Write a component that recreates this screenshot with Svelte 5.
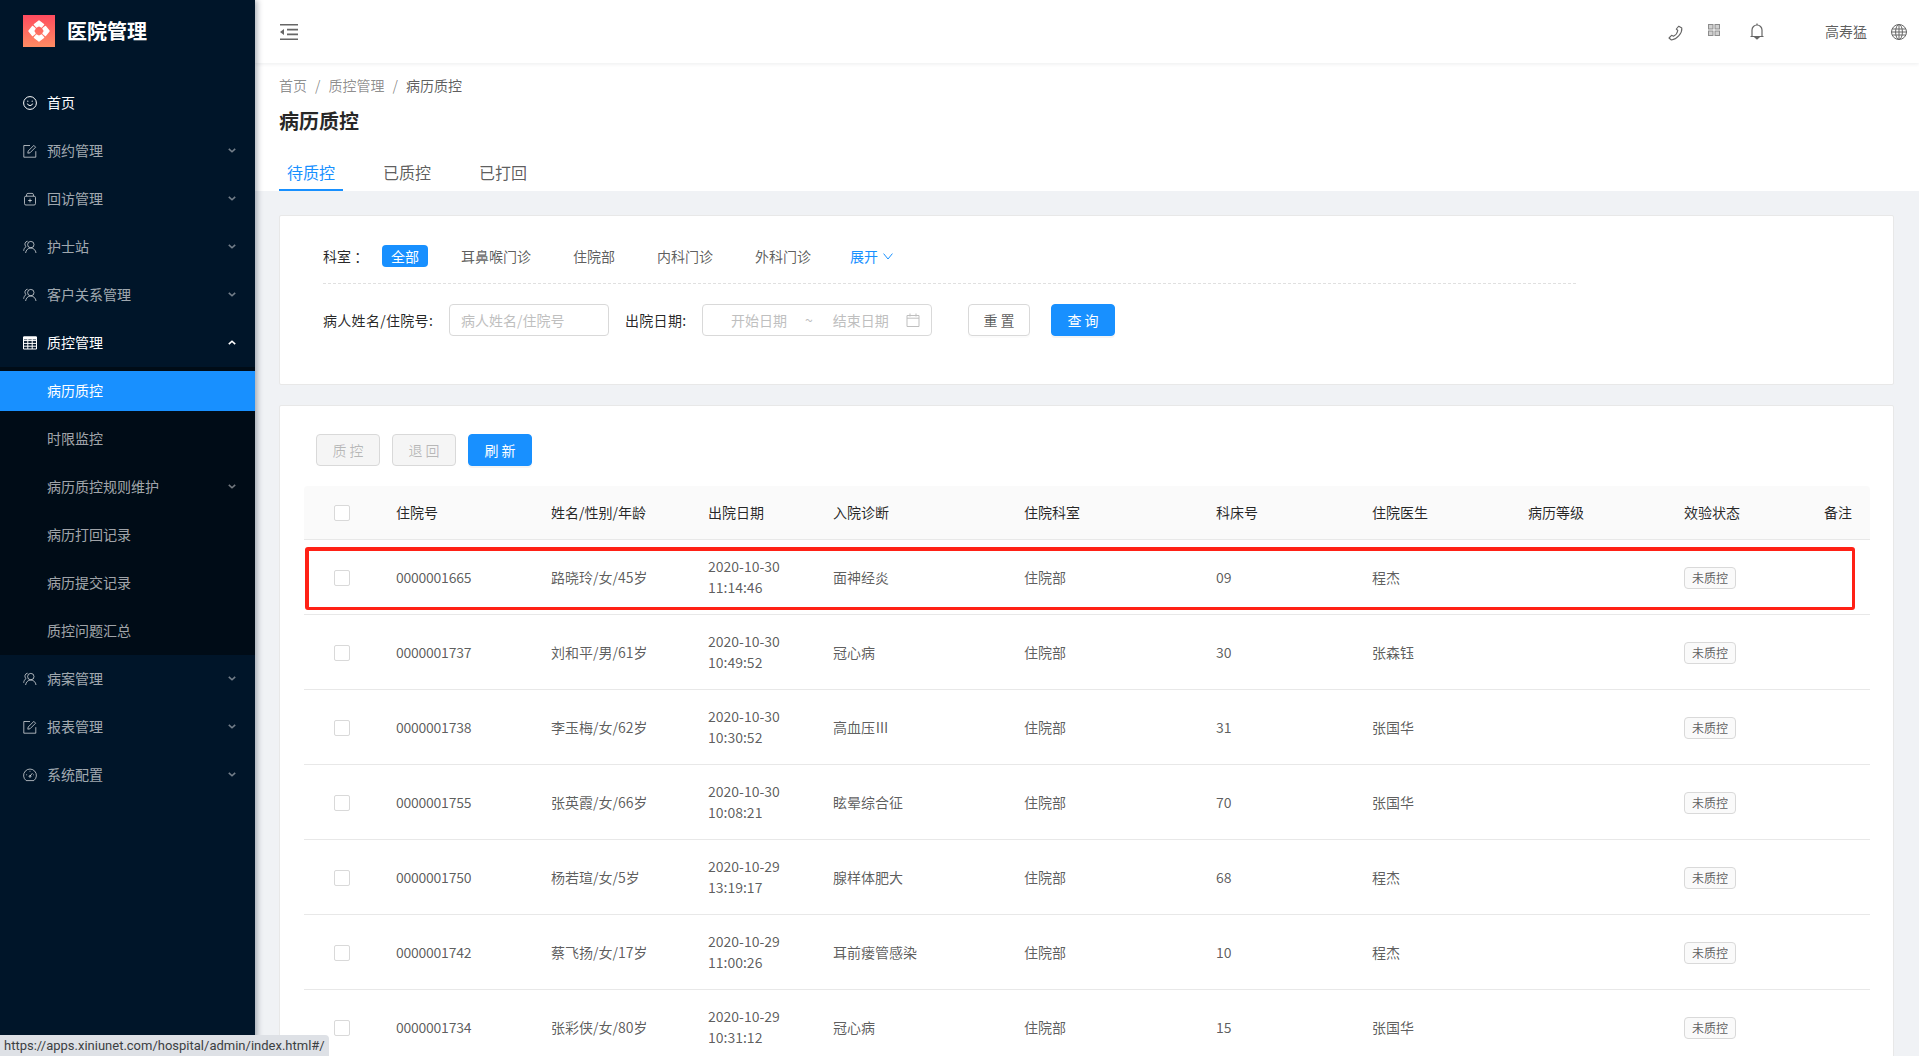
<script>
  const menu = [
    { label: "首页", icon: "smile", active: true },
    { label: "预约管理", icon: "edit", arrow: "down" },
    { label: "回访管理", icon: "bag", arrow: "down" },
    { label: "护士站", icon: "team", arrow: "down" },
    { label: "客户关系管理", icon: "team", arrow: "down" },
    {
      label: "质控管理",
      icon: "table",
      arrow: "up",
      active: true,
      children: [
        { label: "病历质控", selected: true },
        { label: "时限监控" },
        { label: "病历质控规则维护", arrow: "down" },
        { label: "病历打回记录" },
        { label: "病历提交记录" },
        { label: "质控问题汇总" },
      ],
    },
    { label: "病案管理", icon: "team", arrow: "down" },
    { label: "报表管理", icon: "edit", arrow: "down" },
    { label: "系统配置", icon: "gauge", arrow: "down" },
  ];

  const departments = ["全部", "耳鼻喉门诊", "住院部", "内科门诊", "外科门诊"];
  const tabs = ["待质控", "已质控", "已打回"];
  const heads = ["住院号", "姓名/性别/年龄", "出院日期", "入院诊断", "住院科室", "科床号", "住院医生", "病历等级", "效验状态", "备注"];

  const rows = [
    { no: "0000001665", name: "路晓玲/女/45岁", date: "2020-10-30", time: "11:14:46", diag: "面神经炎", bed: "09", doctor: "程杰" },
    { no: "0000001737", name: "刘和平/男/61岁", date: "2020-10-30", time: "10:49:52", diag: "冠心病", bed: "30", doctor: "张森钰" },
    { no: "0000001738", name: "李玉梅/女/62岁", date: "2020-10-30", time: "10:30:52", diag: "高血压Ⅲ", bed: "31", doctor: "张国华" },
    { no: "0000001755", name: "张英霞/女/66岁", date: "2020-10-30", time: "10:08:21", diag: "眩晕综合征", bed: "70", doctor: "张国华" },
    { no: "0000001750", name: "杨若瑄/女/5岁", date: "2020-10-29", time: "13:19:17", diag: "腺样体肥大", bed: "68", doctor: "程杰" },
    { no: "0000001742", name: "蔡飞扬/女/17岁", date: "2020-10-29", time: "11:00:26", diag: "耳前瘘管感染", bed: "10", doctor: "程杰" },
    { no: "0000001734", name: "张彩侠/女/80岁", date: "2020-10-29", time: "10:31:12", diag: "冠心病", bed: "15", doctor: "张国华" },
  ];
</script>

{#snippet icon(name)}
  <svg class="ico" viewBox="0 0 14 14" fill="none" stroke="currentColor" stroke-width="1">
    {#if name === "smile"}
      <circle cx="7" cy="7" r="6.4" />
      <path d="M4.4 7.6a2.7 2.7 0 0 0 5.2 0" />
      <circle cx="4.8" cy="5.2" r=".6" fill="currentColor" stroke="none" />
      <circle cx="9.2" cy="5.2" r=".6" fill="currentColor" stroke="none" />
    {:else if name === "edit"}
      <path d="M7 1.5H.8v11.7h12V7.2" />
      <path d="M4.8 9.2l.4-2.2 5.6-5.6 1.8 1.8-5.6 5.6z" />
    {:else if name === "bag"}
      <rect x="1.5" y="4.2" width="11" height="8.8" rx="1.4" />
      <path d="M3.6 4.2V2.6c0-.7.5-1.2 1.2-1.2h4.4c.7 0 1.2.5 1.2 1.2v1.6M7 6.6v3.8M5.1 8.5h3.8" />
    {:else if name === "team"}
      <circle cx="7.8" cy="4.6" r="3.2" />
      <path d="M2.6 13c.3-2.7 2.3-5 5.2-5s4.9 2.3 5.2 5" />
      <path d="M4.6 1.2a3 3 0 0 0-1.6 5.3C1.7 7.4.8 9 .7 10.8" />
    {:else if name === "table"}
      <path d="M.5 1h13v12H.5zM.5 4.6h13M.5 7.4h13M.5 10.2h13M4.8 3V13M9.2 3V13" />
      <path d="M.5 1h13v2H.5z" fill="currentColor" />
    {:else if name === "gauge"}
      <path d="M3.2 12.6a6.4 6.4 0 1 1 7.6 0z" />
      <path d="M7 8.2l2.4-3M3.2 6.8h.9M7 2.8v.9M10.1 6.8h.7" />
      <circle cx="7" cy="8.4" r=".9" />
    {/if}
  </svg>
{/snippet}

{#snippet chevron(dir)}
  <svg class="chev" class:up={dir === "up"} viewBox="0 0 10 6" fill="none" stroke="currentColor" stroke-width="2">
    {#if dir === "up"}
      <path d="M1 5l4-3.6L9 5" />
    {:else}
      <path d="M1 1l4 3.6L9 1" />
    {/if}
  </svg>
{/snippet}

<div class="layout">
  <aside class="sider">
    <div class="brand">
      <svg class="logo" viewBox="0 0 32 32">
        <defs>
          <linearGradient id="logo-bg" x1="0" y1="0" x2="0" y2="1">
            <stop offset="0" stop-color="#ff4b5f" />
            <stop offset="1" stop-color="#ff8c63" />
          </linearGradient>
        </defs>
        <rect width="32" height="32" fill="url(#logo-bg)" />
        <g fill="#fff" stroke="#fff" stroke-width="1.4" stroke-linejoin="round">
          <path d="M16 6l4.6 3.6-2.2 2.4-2.4-1.4-2.4 1.4-2.2-2.4z" />
          <path d="M16 6l4.6 3.6-2.2 2.4-2.4-1.4-2.4 1.4-2.2-2.4z" transform="rotate(90 16 16)" />
          <path d="M16 6l4.6 3.6-2.2 2.4-2.4-1.4-2.4 1.4-2.2-2.4z" transform="rotate(180 16 16)" />
          <path d="M16 6l4.6 3.6-2.2 2.4-2.4-1.4-2.4 1.4-2.2-2.4z" transform="rotate(270 16 16)" />
        </g>
      </svg>
      <span class="brand-name">医院管理</span>
    </div>

    <nav class="menu">
      {#each menu as item}
        <div class="menu-item" class:active={item.active}>
          {@render icon(item.icon)}
          <span>{item.label}</span>
          {#if item.arrow}
            {@render chevron(item.arrow)}
          {/if}
        </div>
        {#if item.children}
          <div class="submenu">
            {#each item.children as sub}
              <div class="sub-item" class:selected={sub.selected}>
                <span>{sub.label}</span>
                {#if sub.arrow}
                  {@render chevron(sub.arrow)}
                {/if}
              </div>
            {/each}
          </div>
        {/if}
      {/each}
    </nav>
  </aside>

  <div class="main">
    <header class="topbar">
      <svg class="fold" viewBox="0 0 18 16" fill="#666">
        <path d="M0 0h18v1.6H0zM0 14.4h18V16H0zM7 4.8h11v1.6H7zM7 9.6h11v1.6H7zM4 5v6L0 8z" />
      </svg>
      <div class="top-right">
        <svg class="t-phone" viewBox="0 0 16 16" fill="none" stroke="#666" stroke-width="1.1" stroke-linejoin="round">
          <path d="M10.8 1.2l3 1.8c.6 5-4.8 11.4-10.4 12L1 13l2.6-2.7 1.9 1c1.9-1 3.9-3.6 4.3-5.8L8.3 4z" />
        </svg>
        <svg class="t-grid" viewBox="0 0 12 12" fill="#d0d0d0" stroke="#8c8c8c" stroke-width="1">
          <rect x=".5" y=".5" width="4.5" height="4.5" />
          <rect x="7" y=".5" width="4.5" height="4.5" />
          <rect x=".5" y="7" width="4.5" height="4.5" />
          <rect x="7" y="7" width="4.5" height="4.5" />
        </svg>
        <svg class="t-bell" viewBox="0 0 14 17" fill="none" stroke="#666" stroke-width="1.2">
          <path d="M2 13.5V7a5 5 0 0 1 10 0v6.5M.5 13.5h13" />
          <path d="M7 .5V2" />
          <path d="M5.4 14.5h3.2L7 16z" fill="#666" />
        </svg>
        <span class="user">高寿猛</span>
        <svg class="t-globe" viewBox="0 0 16 16" fill="none" stroke="#666" stroke-width="1">
          <circle cx="8" cy="8" r="7.5" />
          <ellipse cx="8" cy="8" rx="3.4" ry="7.5" />
          <path d="M8 .5v15M1.2 5h13.6M1.2 11h13.6M.5 8h15" />
        </svg>
      </div>
    </header>

    <section class="page-head">
      <div class="crumbs">
        <span>首页</span><i>/</i><span>质控管理</span><i>/</i><span class="current">病历质控</span>
      </div>
      <h1>病历质控</h1>
      <div class="tabs">
        {#each tabs as tab, i}
          <div class="tab" class:on={i === 0}>{tab}</div>
        {/each}
      </div>
    </section>

    <section class="card filter-card">
      <div class="dept-row">
        <span class="dept-label">科室 ：</span>
        {#each departments as dept, i}
          <span class="dept" class:on={i === 0}>{dept}</span>
        {/each}
        <span class="expand">
          展开
          <svg viewBox="0 0 10 7" fill="none" stroke="currentColor" stroke-width="1"><path d="M.6.6L5 6 9.4.6" /></svg>
        </span>
      </div>
      <div class="search-row">
        <label class="name-label" for="patient">病人姓名/住院号:</label>
        <input id="patient" class="input" placeholder="病人姓名/住院号" />
        <span class="date-label">出院日期:</span>
        <div class="range">
          <span class="start">开始日期</span>
          <span class="tilde">~</span>
          <span class="end">结束日期</span>
          <svg viewBox="0 0 14 14" fill="none" stroke="#bfbfbf" stroke-width="1">
            <path d="M1 2.5h12v11H1zM1 5.2h12M4 .5v3M10 .5v3" />
          </svg>
        </div>
        <button class="btn reset">重 置</button>
        <button class="btn primary search">查 询</button>
      </div>
    </section>

    <section class="card table-card">
      <div class="actions">
        <button class="btn" disabled>质 控</button>
        <button class="btn" disabled>退 回</button>
        <button class="btn primary">刷 新</button>
      </div>
      <div class="table-wrap">
        <table class="grid">
          <colgroup>
            <col /><col /><col /><col /><col /><col /><col /><col /><col /><col /><col />
          </colgroup>
          <thead>
            <tr>
              <th class="check"><input type="checkbox" /></th>
              {#each heads as head}
                <th>{head}</th>
              {/each}
            </tr>
          </thead>
          <tbody>
            {#each rows as row}
              <tr>
                <td class="check"><input type="checkbox" /></td>
                <td class="num">{row.no}</td>
                <td>{row.name}</td>
                <td>{row.date}<br />{row.time}</td>
                <td>{row.diag}</td>
                <td>住院部</td>
                <td>{row.bed}</td>
                <td>{row.doctor}</td>
                <td></td>
                <td><span class="tag">未质控</span></td>
                <td></td>
              </tr>
            {/each}
          </tbody>
        </table>
        <div class="mark"></div>
      </div>
    </section>
  </div>

  <div class="status-bar">https://apps.xiniunet.com/hospital/admin/index.html#/</div>
</div>

<style>
  :global(html),
  :global(body) {
    height: 100%;
    overflow: hidden;
  }

  :global(body) {
    background: #f0f2f5;
    font-family: "Noto Sans CJK SC", "Liberation Sans", sans-serif;
    font-size: 14px;
    line-height: 1.5;
    color: rgba(0, 0, 0, 0.65);
  }

  .layout {
    display: flex;
    height: 100vh;
    overflow: hidden;
  }

  /* sidebar */
  .sider {
    flex: none;
    width: 255px;
    background: #001529;
    color: rgba(255, 255, 255, 0.65);
    box-shadow: 2px 0 6px rgba(0, 21, 41, 0.35);
    position: relative;
    z-index: 2;
  }

  .brand {
    display: flex;
    align-items: center;
    height: 83px;
    padding: 0 0 22px 23px;
    box-sizing: border-box;
  }

  .logo {
    width: 32px;
    height: 32px;
  }

  .brand-name {
    margin-left: 12px;
    font-size: 20px;
    font-weight: 600;
    color: #fff;
  }

  .menu-item,
  .sub-item {
    display: flex;
    align-items: center;
    box-sizing: border-box;
    height: 40px;
    padding: 0 0 1px 23px;
    margin-bottom: 8px;
  }

  .menu-item.active {
    color: #fff;
  }

  .ico {
    width: 14px;
    height: 14px;
    margin-right: 10px;
    flex: none;
  }

  .chev {
    width: 8px;
    height: 5px;
    margin-left: auto;
    margin-right: 19px;
    color: rgba(255, 255, 255, 0.45);
  }

  .chev.up {
    color: #fff;
  }

  .submenu {
    background: #000c17;
    margin: -4px 0 4px;
    padding: 4px 0;
  }

  .sub-item {
    padding-left: 47px;
  }

  .sub-item:last-child {
    margin-bottom: 0;
  }

  .sub-item.selected {
    background: #1890ff;
    color: #fff;
  }

  /* main column */
  .main {
    flex: 1;
    min-width: 0;
  }

  .topbar {
    display: flex;
    align-items: center;
    justify-content: space-between;
    height: 63px;
    padding: 0 12px 0 25px;
    background: #fff;
    box-shadow: 0 1px 4px rgba(0, 21, 41, 0.08);
    position: relative;
  }

  .fold {
    width: 18px;
    height: 16px;
  }

  .top-right {
    display: flex;
    align-items: center;
  }

  .t-phone {
    width: 16px;
    height: 16px;
    margin-top: 2px;
  }

  .t-grid {
    width: 12px;
    height: 12px;
    margin-left: 24px;
    margin-top: -3px;
  }

  .t-bell {
    width: 14px;
    height: 17px;
    margin-left: 30px;
  }

  .user {
    margin-left: 61px;
    margin-top: -1px;
  }

  .t-globe {
    width: 16px;
    height: 16px;
    margin-left: 24px;
  }

  .page-head {
    background: #fff;
    padding: 11px 24px 0;
    height: 128px;
    box-sizing: border-box;
  }

  .crumbs {
    display: flex;
    color: rgba(0, 0, 0, 0.45);
    line-height: 22px;
  }

  .crumbs i {
    font-style: normal;
    margin: 0 8px;
  }

  .crumbs .current {
    color: rgba(0, 0, 0, 0.65);
  }

  h1 {
    margin: 11px 0 0;
    font-size: 20px;
    font-weight: 600;
    line-height: 28px;
    color: rgba(0, 0, 0, 0.85);
  }

  .tabs {
    display: flex;
    gap: 32px;
    margin-top: 16px;
  }

  .tab {
    position: relative;
    padding: 9px 8px 7px;
    font-size: 16px;
    line-height: 24px;
  }

  .tab.on {
    color: #1890ff;
  }

  .tab.on::after {
    content: "";
    position: absolute;
    left: 0;
    right: 0;
    bottom: 0;
    height: 2px;
    background: #1890ff;
  }

  .card {
    background: #fff;
    border: 1px solid #e8e8e8;
    border-radius: 2px;
    margin: 0 25px 20px 24px;
  }

  /* filter card */
  .filter-card {
    margin-top: 24px;
    height: 170px;
    box-sizing: border-box;
    padding: 29px 0 0 43px;
  }

  .dept-row {
    display: flex;
    align-items: center;
    width: 1253px;
    height: 22px;
    padding-bottom: 16px;
    border-bottom: 1px dashed #e0e0e0;
  }

  .dept-label {
    width: 59px;
    flex: none;
    color: rgba(0, 0, 0, 0.85);
  }

  .dept {
    height: 22px;
    line-height: 22px;
    padding: 0 9px;
    margin-right: 24px;
    border-radius: 4px;
  }

  .dept.on {
    background: #1890ff;
    color: #fff;
  }

  .expand {
    display: flex;
    align-items: center;
    margin-left: 6px;
    color: #1890ff;
  }

  .expand svg {
    width: 10px;
    height: 7px;
    margin-left: 5px;
  }

  .search-row {
    display: flex;
    align-items: center;
    margin-top: 20px;
  }

  .name-label,
  .date-label {
    color: rgba(0, 0, 0, 0.85);
    letter-spacing: 0.3px;
  }

  .name-label {
    width: 126px;
  }

  .input {
    width: 160px;
    height: 32px;
    box-sizing: border-box;
    padding: 0 11px;
    border: 1px solid #d9d9d9;
    border-radius: 4px;
    font: inherit;
    outline: none;
  }

  .input::placeholder {
    color: #bfbfbf;
  }

  .date-label {
    margin-left: 16px;
    width: 77px;
  }

  .range {
    display: flex;
    align-items: center;
    width: 230px;
    height: 32px;
    box-sizing: border-box;
    padding: 0 11px 0 28px;
    border: 1px solid #d9d9d9;
    border-radius: 4px;
    color: #bfbfbf;
  }

  .tilde {
    margin: 0 20px 0 18px;
  }

  .range svg {
    width: 14px;
    height: 14px;
    margin-left: auto;
  }

  .btn {
    width: 64px;
    height: 32px;
    padding: 0;
    font: inherit;
    color: rgba(0, 0, 0, 0.65);
    background: #fff;
    border: 1px solid #d9d9d9;
    border-radius: 4px;
    box-shadow: 0 2px 0 rgba(0, 0, 0, 0.015);
  }

  .btn:disabled {
    color: rgba(0, 0, 0, 0.25);
    background: #f5f5f5;
    box-shadow: none;
  }

  .btn.primary {
    color: #fff;
    background: #1890ff;
    border-color: #1890ff;
    box-shadow: 0 2px 0 rgba(0, 0, 0, 0.045);
  }

  .reset {
    width: 62px;
    margin-left: 36px;
  }

  .search {
    margin-left: 21px;
  }

  /* table card */
  .table-card {
    padding: 28px 24px 0;
  }

  .actions {
    display: flex;
    gap: 12px;
    margin-left: 12px;
  }

  .table-wrap {
    position: relative;
    margin-top: 20px;
  }

  .grid {
    width: 1566px;
    table-layout: fixed;
    border-collapse: separate;
    border-spacing: 0;
  }

  .grid col:nth-child(1) { width: 76px; }
  .grid col:nth-child(2) { width: 155px; }
  .grid col:nth-child(3) { width: 157px; }
  .grid col:nth-child(4) { width: 125px; }
  .grid col:nth-child(5) { width: 191px; }
  .grid col:nth-child(6) { width: 192px; }
  .grid col:nth-child(7) { width: 156px; }
  .grid col:nth-child(8) { width: 156px; }
  .grid col:nth-child(9) { width: 156px; }
  .grid col:nth-child(10) { width: 140px; }
  .grid col:nth-child(11) { width: 62px; }

  th,
  td {
    padding: 16px;
    text-align: left;
    font-weight: 400;
    border-bottom: 1px solid #e8e8e8;
  }

  th {
    background: #fafafa;
    color: rgba(0, 0, 0, 0.85);
  }

  th:first-child {
    border-top-left-radius: 4px;
  }

  th:last-child {
    border-top-right-radius: 4px;
  }

  .num {
    letter-spacing: -0.25px;
  }

  .check {
    padding: 1px 0 0;
    text-align: center;
  }

  .check input {
    appearance: none;
    display: block;
    width: 16px;
    height: 16px;
    margin: 0 auto;
    background: #fff;
    border: 1px solid #d9d9d9;
    border-radius: 2px;
  }

  .tag {
    display: inline-block;
    box-sizing: border-box;
    width: 52px;
    height: 22px;
    line-height: 20px;
    text-align: center;
    font-size: 12px;
    background: #fafafa;
    border: 1px solid #d9d9d9;
    border-radius: 4px;
    vertical-align: middle;
  }

  .mark {
    position: absolute;
    left: 1px;
    top: 61px;
    width: 1550px;
    height: 63px;
    box-sizing: border-box;
    border: 3px solid #ff2116;
    border-width: 4px 3px 3px 4px;
    border-radius: 3px;
    pointer-events: none;
  }

  .status-bar {
    position: fixed;
    left: 0;
    bottom: 0;
    width: 329px;
    height: 21px;
    box-sizing: border-box;
    padding-left: 4px;
    background: #dee1e6;
    border-top-right-radius: 4px;
    font-family: Roboto, sans-serif;
    font-size: 13px;
    line-height: 21px;
    color: #3c4043;
    z-index: 3;
  }
</style>
